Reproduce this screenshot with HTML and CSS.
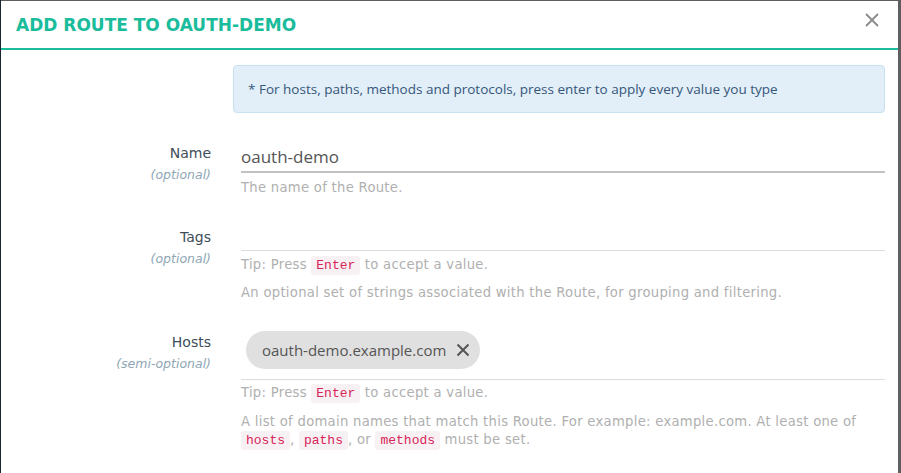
FILE: index.html
```html
<!DOCTYPE html>
<html>
<head>
<meta charset="utf-8">
<link rel="stylesheet" href="styles.css">
</head>
<body>
<div class="modal">
  <div class="modal-header">
    <h1 class="title">ADD ROUTE TO OAUTH-DEMO</h1>
    <button class="close" aria-label="Close">
      <svg width="14" height="14" viewBox="0 0 14 14"><path d="M1 1L13 13M13 1L1 13" stroke="#8a8a8a" stroke-width="1.8" fill="none"/></svg>
    </button>
  </div>
  <div class="modal-body">
    <div class="info">* For hosts, paths, methods and protocols, press enter to apply every value you type</div>

    <div class="row row-name">
      <div class="label"><div class="label-main">Name</div><div class="label-sub">(optional)</div></div>
      <div class="field">
        <div class="input input-text">oauth-demo</div>
        <div class="help first">The name of the Route.</div>
      </div>
    </div>

    <div class="row row-tags">
      <div class="label"><div class="label-main">Tags</div><div class="label-sub">(optional)</div></div>
      <div class="field">
        <div class="input input-tags"></div>
        <div class="help first">Tip: Press <code>Enter</code> to accept a value.</div>
        <div class="help second">An optional set of strings associated with the Route, for grouping and filtering.</div>
      </div>
    </div>

    <div class="row row-hosts">
      <div class="label"><div class="label-main">Hosts</div><div class="label-sub">(semi-optional)</div></div>
      <div class="field">
        <div class="input input-chips">
          <span class="chip">oauth-demo.example.com
            <svg class="chip-x" width="14" height="14" viewBox="0 0 14 14"><path d="M1.5 1.5L12.5 12.5M12.5 1.5L1.5 12.5" stroke="#555" stroke-width="2" fill="none"/></svg>
          </span>
        </div>
        <div class="help first">Tip: Press <code>Enter</code> to accept a value.</div>
        <div class="help second">A list of domain names that match this Route. For example: example.com. At least one of <code>hosts</code>, <code>paths</code>, or <code>methods</code> must be set.</div>
      </div>
    </div>
  </div>
</div>
</body>
</html>
```

FILE: styles.css
```css
html, body {
  margin: 0;
  padding: 0;
  height: 100%;
  overflow: hidden;
}
body {
  background: linear-gradient(to right, #1b2430 0, #1b2430 1px, #5e5e5e 1px);
  padding-top: 1px;
  box-sizing: border-box;
  font-family: "Open Sans", sans-serif;
}
.modal {
  margin-left: 1px;
  width: 897px;
  height: 100%;
  background: #fff;
}
.modal-header {
  height: 47px;
  border-bottom: 2px solid #1bbc9b;
  display: flex;
  align-items: center;
  justify-content: space-between;
  padding: 0 19px 0 15px;
}
.title {
  margin: 0;
  font-family: "DejaVu Sans", sans-serif;
  font-weight: bold;
  font-size: 17px;
  color: #1bbc9b;
  padding-top: 1px;
}
.close {
  border: 0;
  background: none;
  padding: 0;
  width: 14px;
  height: 14px;
  margin-top: -9px;
  display: flex;
}
.modal-body {
  padding: 15px 13px 0 0;
}
.info {
  margin-left: 232px;
  height: 46px;
  box-sizing: content-box;
  background: #e2eef8;
  border: 1px solid #c8e1f1;
  border-radius: 4px;
  color: #35577a;
  font-size: 13.5px;
  letter-spacing: 0;
  line-height: 47px;
  padding-left: 14px;
}
.row {
  display: flex;
}
.label {
  width: 210px;
  text-align: right;
  flex: none;
}
.label-main {
  font-family: "DejaVu Sans", sans-serif;
  font-size: 14px;
  line-height: 20px;
  color: #3d4d5a;
}
.label-sub {
  font-family: "DejaVu Sans", sans-serif;
  font-style: italic;
  font-size: 12.5px;
  line-height: 16px;
  color: #8ea6b5;
  margin-top: 4px;
}
.field {
  margin-left: 30px;
  flex: 1;
}
.help {
  font-family: "DejaVu Sans", sans-serif;
  font-size: 13.2px;
  letter-spacing: 0.28px;
  line-height: 18px;
  color: #b0b0b0;
}
code {
  font-family: "Liberation Mono", monospace;
  font-size: 13px;
  letter-spacing: 0;
  color: #d6245a;
  background: #f8f1f3;
  border-radius: 3px;
  padding: 2px 5px;
}
.row-name {
  margin-top: 30px;
}
.input-text {
  height: 28px;
  border-bottom: 2px solid #c2c2c2;
  font-family: "Open Sans", sans-serif;
  font-size: 17px;
  line-height: 27px;
  color: #555;
}
.row-name .help.first {
  margin-top: 6px;
}
.row-tags {
  margin-top: 30px;
}
.input-tags {
  height: 23px;
  border-bottom: 1px solid #dcdcdc;
}
.row-tags .help.first, .row-hosts .help.first {
  margin-top: 5px;
}
.help.second {
  margin-top: 10px;
}
.row-tags .help.second {
  margin-top: 9px;
}
.row-hosts {
  margin-top: 29px;
}
.row-hosts .label {
  padding-top: 1px;
}
.input-chips {
  padding: 0 0 10px 5px;
  border-bottom: 1px solid #dcdcdc;
}
.chip {
  display: inline-flex;
  align-items: center;
  height: 38px;
  border-radius: 19px;
  background: #e0e0e0;
  padding: 0 10px 0 16px;
  font-family: "Open Sans", sans-serif;
  font-size: 15px;
  color: #555;
  vertical-align: top;
}
.chip-x {
  margin-left: 10px;
}
.row-hosts .help.first {
  margin-top: 4px;
}
```
